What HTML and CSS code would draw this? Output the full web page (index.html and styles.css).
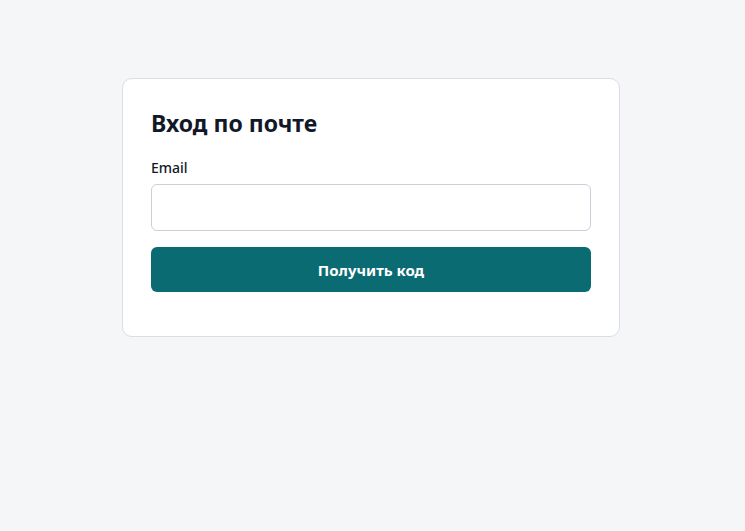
FILE: index.html
```html
<!DOCTYPE html>
<html lang="ru">
<head>
  <meta charset="UTF-8">
  <meta name="viewport" content="width=device-width, initial-scale=1.0">
  <title>Вход по почте</title>
  <link rel="stylesheet" href="styles.css">
</head>
<body>
  <main class="page">
    <form class="card" onsubmit="return false">
      <h1>Вход по почте</h1>
      <div class="form-group">
        <label for="email">Email</label>
        <input type="email" id="email" autocomplete="email">
      </div>
      <button type="submit">Получить код</button>
    </form>
  </main>
</body>
</html>
```

FILE: styles.css
```css
:root {
  --primary: #0b6b73;
  --background: #f5f6f8;
  --text-color: #111827;
  --border: #d9dde4;
  --radius: 6px;
}
* { box-sizing: border-box; }
body {
  margin: 0;
  font-family: "Noto Sans", "Open Sans", sans-serif;
  background: var(--background);
  color: var(--text-color);
}
.page {
  display: flex;
  justify-content: center;
  padding: 78px 3px 0 0;
}
.card {
  width: 498px;
  background: #fff;
  border: 1px solid var(--border);
  border-radius: 10px;
  padding: 28px 28px 44px;
}
h1 {
  margin: 0 0 19px;
  font-size: 23px;
  line-height: 32px;
  font-weight: 700;
}
.form-group {
  margin-bottom: 16px;
}
label {
  display: block;
  margin-bottom: 6px;
  font-size: 14px;
  line-height: 20px;
  font-weight: 500;
}
input {
  display: block;
  width: 100%;
  height: 47px;
  padding: 0 12px;
  border: 1px solid #c8d0da;
  border-radius: var(--radius);
  font: inherit;
  font-size: 15px;
}
button {
  display: block;
  width: 100%;
  height: 45px;
  background: var(--primary);
  color: #fff;
  border: none;
  border-radius: var(--radius);
  font: inherit;
  font-size: 15px;
  font-weight: 700;
  cursor: pointer;
}
```
